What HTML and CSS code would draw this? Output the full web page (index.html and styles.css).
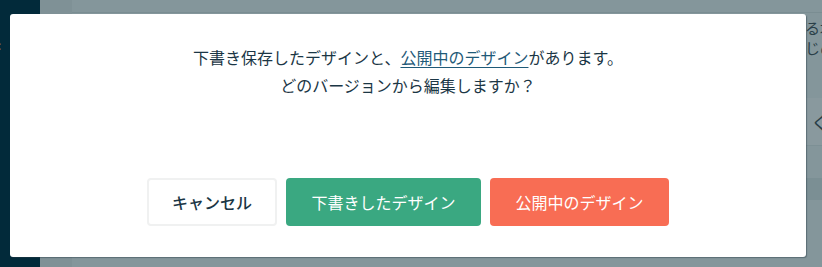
FILE: index.html
```html
<!DOCTYPE html>
<html lang="ja">
<head>
<meta charset="utf-8">
<link rel="stylesheet" href="styles.css">
</head>
<body>
<div class="page">
  <aside class="sidebar"><span class="side-mark">:</span></aside>
  <div class="rail"></div>
  <main class="main">
    <div class="topbar"></div>
    <div class="bg-text bg-line1">る均</div>
    <div class="bg-text bg-line2">じめ</div>
    <div class="band band-light"><span class="bg-text bg-chev">く</span></div>
    <div class="band band-mid"></div>
    <div class="band band-dark"></div>
  </main>
</div>
<div class="modal">
  <p class="message">下書き保存したデザインと、<a class="link" href="#">公開中のデザイン</a>があります。<br>どのバージョンから編集しますか？</p>
  <div class="actions">
    <button class="btn btn-cancel">キャンセル</button>
    <button class="btn btn-draft">下書きしたデザイン</button>
    <button class="btn btn-public">公開中のデザイン</button>
  </div>
</div>
</body>
</html>
```

FILE: styles.css
```css
* { box-sizing: border-box; }
html, body {
  margin: 0;
  padding: 0;
  width: 822px;
  height: 267px;
  overflow: hidden;
  font-family: "Noto Sans CJK JP", "Noto Sans", sans-serif;
}
.page {
  display: flex;
  width: 822px;
  height: 267px;
  background: #84969b;
}
.sidebar {
  width: 40px;
  background: #022a3a;
  color: #8a7a50;
  font-size: 12px;
  padding-top: 36px;
}
.side-mark { display: block; margin-left: -2px; }
.rail {
  width: 32px;
  background: #7f9196;
}
.main {
  flex: 1;
  display: flex;
  flex-direction: column;
  color: #1c3642;
  font-size: 15px;
  align-items: flex-end;
}
.topbar {
  width: 100%;
  height: 13px;
  background: #84969b;
  border-bottom: 1px solid #7a8d92;
}
.bg-text {
  line-height: 20px;
  color: #2a3f48;
  width: 17px;
  overflow: hidden;
  white-space: nowrap;
}
.bg-line1 { margin-top: 5px; }
.band { width: 100%; display: flex; justify-content: flex-end; }
.band-light {
  margin-top: 40px;
  height: 47px;
  background: #89999e;
  align-items: center;
}
.bg-chev { width: 11px; font-size: 18px; }
.band-mid { height: 33px; background: #84969b; border-top: 1px solid #7d9095; }
.band-dark { height: 22px; background: #7b8f94; }
.modal {
  position: absolute;
  left: 10px;
  top: 14px;
  width: 796px;
  height: 243px;
  background: #fff;
  border-radius: 3px;
  box-shadow: 1px 1px 1px rgba(40, 60, 70, 0.45);
  display: flex;
  flex-direction: column;
  align-items: center;
  padding-top: 29px;
}
.message {
  margin: 0;
  font-size: 16px;
  line-height: 28px;
  text-align: center;
  color: #1b3645;
}
.link {
  color: #1f5a78;
  text-decoration: underline;
  text-decoration-thickness: 1px;
  text-underline-offset: 3px;
}
.actions {
  display: flex;
  gap: 9px;
  margin-top: 79px;
}
.btn {
  height: 48px;
  border: 0;
  border-radius: 4px;
  font-family: inherit;
  font-size: 16px;
  padding: 0;
  color: #fff;
  cursor: pointer;
}
.btn-cancel {
  width: 130px;
  background: #fff;
  border: 2px solid #f0f1f1;
  color: #1b3645;
  font-weight: 500;
}
.btn-draft { width: 195px; background: #3aa881; }
.btn-public { width: 179px; background: #f86d54; }
```
